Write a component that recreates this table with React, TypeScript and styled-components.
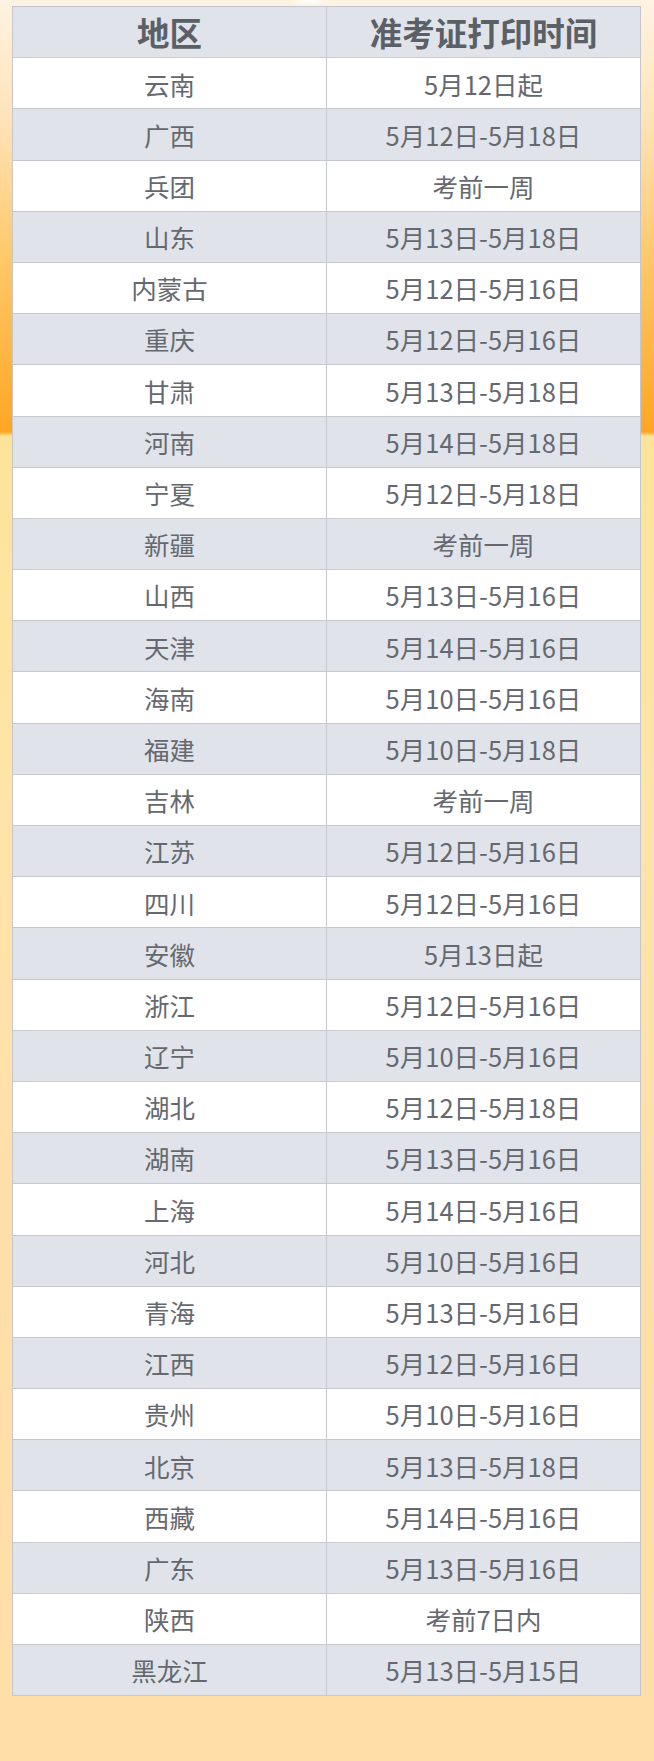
import React from "react";
import styled, { createGlobalStyle } from "styled-components";

const GlobalStyle = createGlobalStyle`
  html, body {
    margin: 0;
    padding: 0;
  }
  body {
    width: 654px;
    min-height: 1761px;
    font-family: "Noto Sans CJK SC", "Noto Sans", sans-serif;
    background:
      radial-gradient(ellipse 22px 8px at 310px 0px, rgba(255,255,255,0.95), rgba(255,255,255,0) 100%),
      linear-gradient(to bottom,
        #fff3e2 0px,
        #ffe3b8 120px,
        #ffc869 260px,
        #ffa623 432px,
        #fde49a 436px,
        #fee4a8 800px,
        #ffdfa9 1200px,
        #ffdea8 1761px);
  }
`;

const Page = styled.div`
  width: 654px;
  min-height: 1761px;
  padding: 6px 13px 0 12px;
  box-sizing: border-box;
`;

const Table = styled.div`
  width: 629px;
  border: 1px solid #c3c7cd;
  border-bottom: none;
  box-sizing: border-box;
  background: #ffffff;
`;

const Row = styled.div<{ $shade: boolean }>`
  display: grid;
  grid-template-columns: 314px 1fr;
  height: 51.2px;
  box-sizing: border-box;
  border-bottom: 1px solid #c6cad0;
  background: ${(p) => (p.$shade ? "#e0e4ea" : "#ffffff")};
`;

const Cell = styled.div<{ $head?: boolean; $first?: boolean }>`
  display: flex;
  align-items: center;
  justify-content: center;
  border-right: ${(p) => (p.$first ? "1px solid #c6cad0" : "none")};
  color: ${(p) => (p.$head ? "#5b5f66" : "#65696f")};
  font-size: ${(p) => (p.$head ? "32.5px" : "25.5px")};
  font-weight: ${(p) => (p.$head ? 700 : 400)};
  line-height: 1;
  white-space: nowrap;
`;

const rows: [string, string][] = [
  ["云南", "5月12日起"],
  ["广西", "5月12日-5月18日"],
  ["兵团", "考前一周"],
  ["山东", "5月13日-5月18日"],
  ["内蒙古", "5月12日-5月16日"],
  ["重庆", "5月12日-5月16日"],
  ["甘肃", "5月13日-5月18日"],
  ["河南", "5月14日-5月18日"],
  ["宁夏", "5月12日-5月18日"],
  ["新疆", "考前一周"],
  ["山西", "5月13日-5月16日"],
  ["天津", "5月14日-5月16日"],
  ["海南", "5月10日-5月16日"],
  ["福建", "5月10日-5月18日"],
  ["吉林", "考前一周"],
  ["江苏", "5月12日-5月16日"],
  ["四川", "5月12日-5月16日"],
  ["安徽", "5月13日起"],
  ["浙江", "5月12日-5月16日"],
  ["辽宁", "5月10日-5月16日"],
  ["湖北", "5月12日-5月18日"],
  ["湖南", "5月13日-5月16日"],
  ["上海", "5月14日-5月16日"],
  ["河北", "5月10日-5月16日"],
  ["青海", "5月13日-5月16日"],
  ["江西", "5月12日-5月16日"],
  ["贵州", "5月10日-5月16日"],
  ["北京", "5月13日-5月18日"],
  ["西藏", "5月14日-5月16日"],
  ["广东", "5月13日-5月16日"],
  ["陕西", "考前7日内"],
  ["黑龙江", "5月13日-5月15日"],
];

export default function App() {
  return (
    <>
      <GlobalStyle />
      <Page>
        <Table>
          <Row $shade>
            <Cell $head $first>地区</Cell>
            <Cell $head>准考证打印时间</Cell>
          </Row>
          {rows.map(([region, time], i) => (
            <Row key={region} $shade={i % 2 === 1}>
              <Cell $first>{region}</Cell>
              <Cell>{time}</Cell>
            </Row>
          ))}
        </Table>
      </Page>
    </>
  );
}
